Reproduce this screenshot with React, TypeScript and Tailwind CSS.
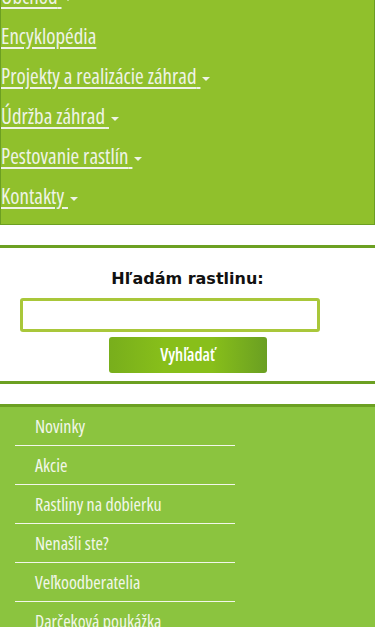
import { ReactNode } from 'react'

const topMenu = [
  { label: 'Obchod', caret: true },
  { label: 'Encyklopédia', caret: false },
  { label: 'Projekty a realizácie záhrad', caret: true },
  { label: 'Údržba záhrad', caret: true },
  { label: 'Pestovanie rastlín', caret: true },
  { label: 'Kontakty', caret: true },
]

const sideMenu = ['Novinky', 'Akcie', 'Rastliny na dobierku', 'Nenašli ste?', 'Veľkoodberatelia', 'Darčeková poukážka']

// condensed face: Open Sans squeezed via its width axis
const narrow = { fontFamily: '"Open Sans", sans-serif', fontStretch: '75%' }

function Caret() {
  return <span className="inline-block ml-[2px] mb-[3px] w-0 h-0 border-x-[4px] border-x-transparent border-t-[4px] border-t-[#eef3e6]" />
}

function MenuLink({ children, caret }: { children: ReactNode; caret: boolean }) {
  return (
    <li className="h-10 leading-10 whitespace-nowrap">
      <a href="#" className="text-[21px] text-[#eef3e6] underline underline-offset-[3px] decoration-[2px]">
        {children}
        {caret && ' '}
      </a>
      {caret && <Caret />}
    </li>
  )
}

export default function App() {
  return (
    <div className="w-[375px] h-[627px] overflow-hidden bg-white">
      <nav className="-mt-[24px] bg-[#90c02c] border border-t-0 border-[#6c9f22] pb-2" style={narrow}>
        <ul>
          {topMenu.map((m) => (
            <MenuLink key={m.label} caret={m.caret}>{m.label}</MenuLink>
          ))}
        </ul>
      </nav>

      <div className="mt-5 border-y-[3px] border-[#6ca022] pt-[21px] pb-[8px] flex flex-col">
        <h3 className="text-center text-[16px] leading-[19px] font-bold text-[#111]" style={{ fontFamily: '"DejaVu Sans", sans-serif' }}>
          Hľadám rastlinu:
        </h3>
        <input
          type="text"
          className="mt-[10px] ml-5 w-[300px] h-[34px] border-[3px] border-[#a9c73a] rounded-[3px] outline-none px-2"
        />
        <button
          className="mt-[5px] self-center w-[158px] h-[36px] rounded-[3px] text-white font-semibold text-[17px] bg-[linear-gradient(to_right,#78ae1c_0%,#88bf1a_35%,#88bf1a_65%,#6a9f22_100%)]"
          style={narrow}
        >
          Vyhľadať
        </button>
      </div>

      <div className="mt-5 border-t-[3px] border-[#6ca022] bg-[#8bc43f] h-[300px]" style={narrow}>
        <ul className="ml-[15px] w-[220px]">
          {sideMenu.map((s, i) => (
            <li
              key={s}
              className={`h-[39px] flex items-center pl-5 text-[18px] font-medium text-[#f2f7ea] ${i < sideMenu.length - 1 ? 'border-b border-[#f2f7ea]' : ''}`}
            >
              {s}
            </li>
          ))}
        </ul>
      </div>
    </div>
  )
}
